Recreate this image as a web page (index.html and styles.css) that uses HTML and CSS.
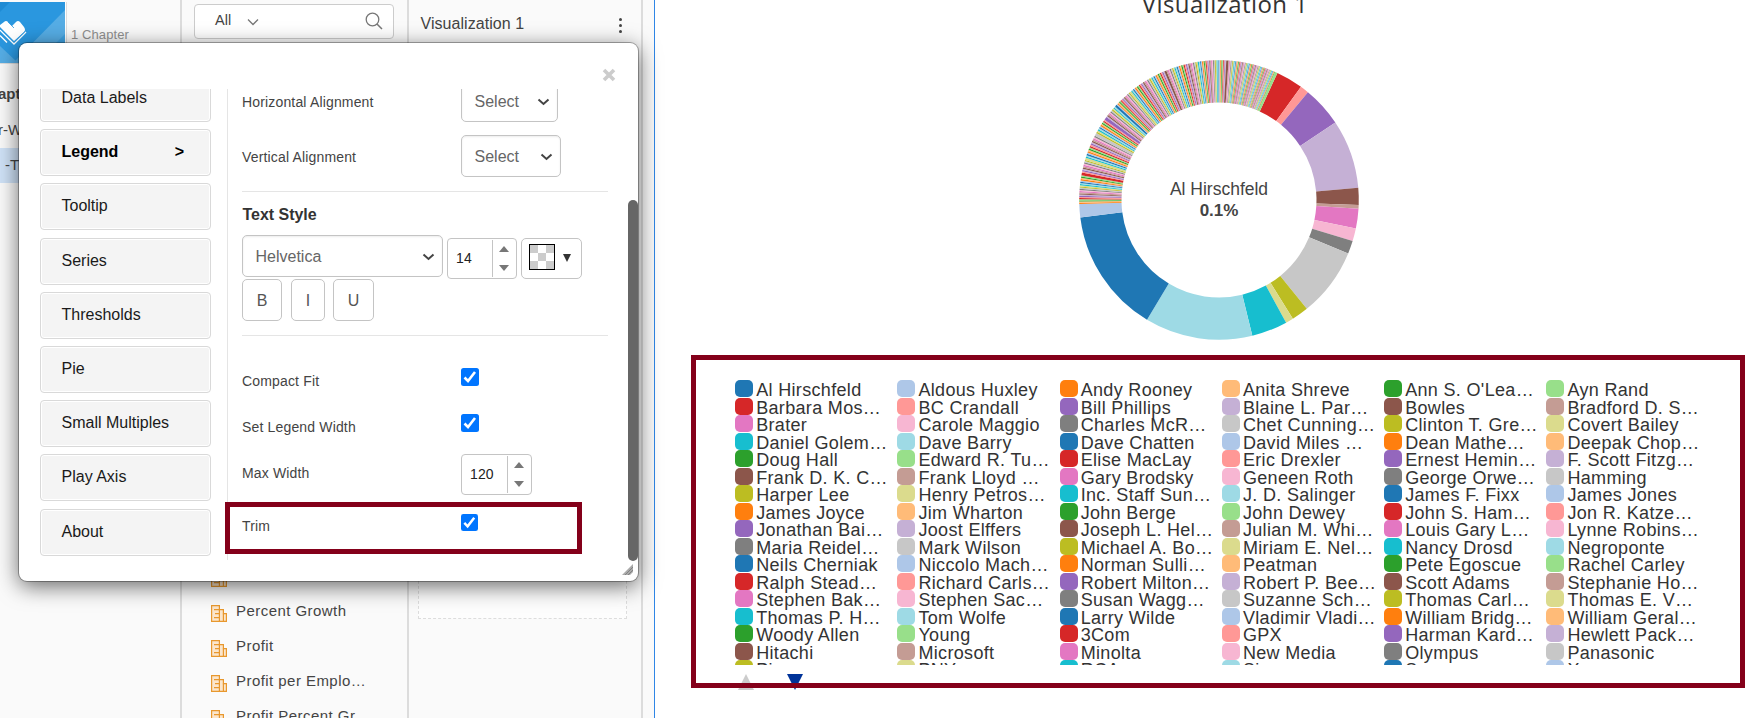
FILE: index.html
```
<!DOCTYPE html>
<html lang="en">
<head>
<meta charset="utf-8">
<title>Visualization 1</title>
<link rel="stylesheet" href="styles.css">
</head>
<body>
<svg class="defs" aria-hidden="true">
  <symbol id="i-field" viewBox="0 0 16 17">
    <path d="M.6.6H8.4V4.6H12.4V8.6H15.4V16.4H.6Z" fill="#fbe6cd" stroke="#e8982e" stroke-width="1.2"/>
    <path d="M8.4 4.6V16.4M12.4 8.6V16.4M3 4.6H8.4M4 8.6H8.4M3 12.6H8.4" fill="none" stroke="#e8982e" stroke-width="1.2"/>
  </symbol>
  <symbol id="i-chev" viewBox="0 0 12 8"><path d="M1 1.5L6 6L11 1.5" fill="none" stroke="currentColor" stroke-width="2"/></symbol>
</svg>
<div class="app">
  <aside class="book">
    <header class="book-head">
      <svg class="logo" width="65" height="61" viewBox="0 0 65 61">
        <rect width="65" height="61" fill="#2a97df"/>
        <path d="M65 8V61H13Z" fill="#56ade5"/><path d="M65 32V61H36Z" fill="#3fa2e2"/>
        <path d="M0 44L18 61H0Z" fill="#56ade5"/><path d="M0 0H10L0 10Z" fill="#1f8bd4"/>
        <path d="M0 23L4 20Q6 18 8 20L12 24L16 20Q18 18 20 20L24 25Q26 28 24 30L14 39L0 25Z" fill="#fff"/>
        <path d="M0 33.500L7 40.500M0 28L14 42L26 30" fill="none" stroke="#fff" stroke-width="1.4"/>
        <path d="M0 26.500L14 40.300L25 29.500M8 20L14 26" fill="none" stroke="#2a97df" stroke-width=".8"/>
      </svg>
      <span class="chapters">1 Chapter</span>
    </header>
    <div class="tree">
      <div class="tree-title">apters</div>
      <div class="tree-item">r-Wise</div>
      <div class="tree-item active">-Trim</div>
    </div>
  </aside>
  <section class="fields">
    <div class="search"><span>All</span>
      <svg class="search-chev" width="12" height="8" viewBox="0 0 12 8"><path d="M1 1.500L6 6.500L11 1.500" fill="none" stroke="#777" stroke-width="1.3"/></svg>
      <svg class="search-icon" width="18" height="18" viewBox="0 0 18 18"><circle cx="7.5" cy="7.5" r="6.3" fill="none" stroke="#777" stroke-width="1.3"/><path d="M12 12L17 17" stroke="#777" stroke-width="1.5"/></svg>
    </div>
    <div class="field-list">
      <div class="field"><svg><use href="#i-field"/></svg></div>
      <div class="field"><svg><use href="#i-field"/></svg>Percent Growth</div>
      <div class="field"><svg><use href="#i-field"/></svg>Profit</div>
      <div class="field"><svg><use href="#i-field"/></svg>Profit per Emplo…</div>
      <div class="field"><svg><use href="#i-field"/></svg>Profit Percent Gr…</div>
    </div>
  </section>
  <section class="shelf">
    <div class="shelf-head"><span>Visualization 1</span><i class="dots"><b></b><b></b><b></b></i></div>
    <div class="dropzone"></div>
  </section>
  <main class="canvas">
    <h1>Visualization 1</h1>
    <div class="chart">
      <svg id="donut" width="282" height="282" viewBox="-141 -141 282 282"></svg>
      <div class="center"><span>Al Hirschfeld</span><strong>0.1%</strong></div>
    </div>
    <div class="legend" id="legend"></div>
    <div class="pager">
      <svg width="16" height="16"><path d="M8 0L16 16H0Z" fill="#ccc"/></svg>
      <svg width="16" height="16"><path d="M0 0H16L8 16Z" fill="#039"/></svg>
    </div>
  </main>
</div>

<div class="modal">
  <svg class="close" width="14" height="14" viewBox="0 0 14 14"><path d="M2 2L12 12M12 2L2 12" stroke="#ccc" stroke-width="3.6"/></svg>
  <div class="modal-body">
    <nav class="menu">
      <a>Data Labels</a>
      <a class="on">Legend<span>&gt;</span></a>
      <a>Tooltip</a><a>Series</a><a>Thresholds</a><a>Pie</a><a>Small Multiples</a><a>Play Axis</a><a>About</a>
    </nav>
    <div class="form">
      <div class="row first"><label>Horizontal Alignment</label><div class="select s1">Select<svg><use href="#i-chev"/></svg></div></div>
      <div class="row"><label>Vertical Alignment</label><div class="select s2">Select<svg><use href="#i-chev"/></svg></div></div>
      <hr>
      <h2>Text Style</h2>
      <div class="fontrow">
        <div class="select font">Helvetica<svg><use href="#i-chev"/></svg></div>
        <div class="num">14<span class="spin"><i class="up"></i><i class="down"></i></span></div>
        <div class="color"><svg width="26" height="26" viewBox="0 0 26 26"><rect x=".5" y=".5" width="25" height="25" fill="#fff" stroke="#000"/><path d="M1 1h8v8h8v8h8v8h-8v-8h-8v8h-8v-8h8v-8h-8zM17 1h8v8h-8z" fill="#ccc"/></svg><i></i></div>
      </div>
      <div class="styles"><span class="b">B</span><span class="i">I</span><span class="u">U</span></div>
      <hr>
      <div class="opt o1"><label>Compact Fit</label><svg class="check" viewBox="0 0 18 18"><rect width="18" height="18" rx="2.5" fill="#0075ff"/><path d="M3.500 9.500L7 13L14 4" fill="none" stroke="#fff" stroke-width="2.6"/></svg></div>
      <div class="opt o2"><label>Set Legend Width</label><svg class="check" viewBox="0 0 18 18"><rect width="18" height="18" rx="2.5" fill="#0075ff"/><path d="M3.500 9.500L7 13L14 4" fill="none" stroke="#fff" stroke-width="2.6"/></svg></div>
      <div class="opt o3"><label>Max Width</label><div class="num">120<span class="spin"><i class="up"></i><i class="down"></i></span></div></div>
      <div class="opt o4"><label>Trim</label><svg class="check small" viewBox="0 0 18 18"><rect width="18" height="18" rx="2.5" fill="#0075ff"/><path d="M3.500 9.500L7 13L14 4" fill="none" stroke="#fff" stroke-width="2.6"/></svg></div>
    </div>
  </div>
  <div class="scroll"></div>
  <svg class="grip" width="11" height="11"><path d="M11 0V8L8 11H0Z" fill="#aaa"/><path d="M3 11L11 3M6 11L11 6" stroke="#777" stroke-width=".8"/></svg>
</div>
<div class="mark mark-trim"></div>
<div class="mark mark-legend"></div>
<script src="chart.js"></script>
</body>
</html>
```
FILE: styles.css
```
* { box-sizing: border-box; }
body { margin: 0; height: 718px; overflow: hidden; position: relative; background: #fff; font-family: "Liberation Sans", Arial, sans-serif; color: #444; }
.defs { position: absolute; width: 0; height: 0; }
.app { display: grid; grid-template-columns: 182px 227px 234px 11px 1fr; height: 718px; background: #fafafa; }
.book, .fields, .shelf { overflow: hidden; border-right: 2px solid #dcdcdc; }
.book-head { display: flex; height: 64px; padding-top: 2px; border-bottom: 1px solid #ddd; }
.logo { display: block; flex: none; box-shadow: 1px 0 0 #fff, 2px 0 0 #ddd; }
.chapters { margin: 25px 0 0 6px; font-size: 13px; line-height: 16px; color: #909090; letter-spacing: .1px; }
.tree { font-size: 15px; white-space: nowrap; padding-top: 13px; }
.tree-title { font-weight: bold; height: 35px; line-height: 34px; margin-left: -2px; }
.tree-item { height: 36px; line-height: 36px; margin-left: -2px; }
.tree-item.active { background: #cfe2f7; line-height: 34px; padding-left: 5px; margin-left: 0; height: 35px; }
.search { display: flex; align-items: center; height: 35px; width: 200px; margin: 4px 0 0 12px; border: 1px solid #ccc; border-radius: 4px; background: #fff; padding: 0 10px 4px 20px; font-size: 14.5px; }
.search-chev { margin: 4px 0 0 16px; }
.search-icon { margin: 2px 0 0 auto; }
.field-list { margin-top: 525px; }
.field { display: flex; height: 35.1px; line-height: 12px; font-size: 15px; letter-spacing: .45px; padding: 6px 0 0 29px; gap: 9px; white-space: nowrap; color: #444; }
.field svg { width: 16px; height: 17px; flex: none; }
.shelf-head { display: flex; height: 43px; justify-content: space-between; padding: 14px 18px 0 11.5px; font-size: 16px; line-height: 19px; letter-spacing: .05px; }
.dots { display: flex; flex-direction: column; gap: 3px; padding-top: 4px; width: 6px; align-items: center; }
.dots b { width: 3px; height: 3px; border-radius: 50%; background: #444; flex: none; }
.dropzone { height: 400px; margin: 176px 14px 0 9px; border: 1px dashed #ddd; background: #fdfdfd; }
.canvas { grid-column: 5; background: #fff; overflow: hidden; border-left: 1px solid #2f86e6; }
h1 { margin: -13px 0 0; width: 1140px; font: 400 24px/34px "Open Sans", sans-serif; color: #333; text-align: center; letter-spacing: .4px; }
.chart { display: grid; margin: 38px 0 0 423px; width: 282px; height: 282px; }
.chart > * { grid-area: 1 / 1; }
.center { display: flex; flex-direction: column; align-items: center; padding-top: 120px; font-size: 17.5px; line-height: 21px; color: #444; }
.center strong { font-size: 17px; }
.legend { display: grid; grid-template-columns: repeat(6, 162.25px); grid-auto-rows: 17.5px; margin: 39px 0 0 80px; height: 285px; overflow: hidden; }
.item { display: flex; gap: 3.2px; white-space: nowrap; font-size: 18px; letter-spacing: .33px; line-height: 21.6px; color: #333; }
.item i { width: 18px; height: 17px; border-radius: 5px; flex: none; }
.pager { display: flex; gap: 33px; margin: 9px 0 0 82.5px; }
.mark { position: absolute; border: 5px solid #84001a; }
.mark-trim { left: 225px; top: 502px; width: 357px; height: 52px; }
.mark-legend { left: 691px; top: 355px; width: 1054px; height: 333px; }
.modal { position: absolute; left: 19px; top: 43px; width: 619px; height: 538px; padding: 46px 29px 0 21px; background: #fff; border-radius: 8px; box-shadow: 0 0 0 1px rgba(0,0,0,.3), 0 5px 22px rgba(0,0,0,.6); }
.close { position: absolute; right: 22px; top: 24.5px; }
.scroll { position: absolute; right: 0; top: 157px; width: 10px; height: 361px; border-radius: 5px; background: #666; }
.grip { position: absolute; right: 5px; top: 521px; }
.modal-body { display: flex; height: 471px; overflow: hidden; }
.menu { width: 188px; border-right: 1px solid #e5e5e5; display: flex; flex-direction: column; gap: 7.2px; flex: none; }
.menu a { display: flex; justify-content: space-between; width: 171px; height: 47px; line-height: 44px; padding: 0 26px 0 20.5px; background: #f4f4f4; border: 1px solid #d9d9d9; border-radius: 4px; font-size: 16px; color: #1a1a1a; flex: none; box-shadow: inset 0 0 0 1px #fff; }
.menu a:first-child { margin-top: -14px; }
.menu .on { font-weight: bold; color: #000; }
.form { width: 366px; margin-left: 14px; font-size: 14px; }
.form label { width: 219px; letter-spacing: .16px; line-height: 16px; color: #444; flex: none; }
.row { display: flex; height: 42px; margin-bottom: 13px; align-items: center; }
.row label { padding-top: 2px; }
.row.first { margin-top: -9px; }
.form hr { border: 0; border-top: 1px solid #e5e5e5; margin: 14px 0 0; }
.select { display: flex; align-items: center; justify-content: space-between; height: 42px; border: 1px solid #c4c4c4; border-radius: 5px; font-size: 16px; color: #666; padding: 2px 7px 0 12.5px; background: #fff; box-shadow: inset 0 1px 2px rgba(0,0,0,.08); }
.select svg { width: 13px; height: 8px; color: #444; }
.s1 { width: 97px; } .s2 { width: 100px; } .font { width: 201px; }
h2 { margin: 13px 0 10px; font-size: 16px; line-height: 20px; color: #333; letter-spacing: -.03px; padding-left: .5px; }
.fontrow { display: flex; height: 42px; align-items: flex-start; }
.num { display: flex; height: 41px; width: 70px; border: 1px solid #c4c4c4; border-radius: 4px; color: #222; padding-left: 8px; font-size: 14px; line-height: 39px; justify-content: space-between; letter-spacing: .15px; }
.spin { width: 24px; height: 37px; margin-top: 1px; border-left: 1px solid #c4c4c4; display: flex; flex-direction: column; align-items: center; gap: 13px; padding: 6px 2px 0 0; }
.spin i { border: 5px solid transparent; }
.spin .up { border-top: 0; border-bottom: 6px solid #777; }
.spin .down { border-bottom: 0; border-top: 6px solid #777; }
.fontrow .num { margin: 3px 4px 0 4px; }
.color { display: flex; width: 61px; height: 41px; margin-top: 3px; border: 1px solid #c4c4c4; border-radius: 5px; padding: 5px 0 0 7px; gap: 8px; }
.color i { margin-top: 10px; height: 8px; border: 4.5px solid transparent; border-top: 8px solid #333; border-bottom: 0; }
.styles { display: flex; margin-top: 2px; height: 42px; gap: 9px; font-size: 16px; line-height: 41px; text-align: center; color: #555; }
.styles span { border: 1px solid #c4c4c4; border-radius: 5px; }
.b { width: 40px; } .i { width: 34px; } .u { width: 41px; margin-left: -1px; }
.opt { display: flex; align-items: flex-start; }
.check { width: 18px; height: 18px; }
.check.small { width: 17px; height: 17px; }
.opt label { margin-top: 5px; }
.o1 { margin-top: 32px; height: 46px; } .o2 { height: 40px; } .o3 { height: 60px; }
.o3 label { margin-top: 11px; } .o3 .num { width: 71px; }
.o4 label { margin-top: 4px; }
```
FILE: chart.js
```
const colors = ['#1f77b4', '#aec7e8', '#ff7f0e', '#ffbb78', '#2ca02c', '#98df8a', '#d62728', '#ff9896', '#9467bd', '#c5b0d5',
  '#8c564b', '#c49c94', '#e377c2', '#f7b6d2', '#7f7f7f', '#c7c7c7', '#bcbd22', '#dbdb8d', '#17becf', '#9edae5'];

const names = [
  'Al Hirschfeld', 'Aldous Huxley', 'Andy Rooney', 'Anita Shreve', "Ann S. O'Lea…", 'Ayn Rand',
  'Barbara Mos…', 'BC Crandall', 'Bill Phillips', 'Blaine L. Par…', 'Bowles', 'Bradford D. S…',
  'Brater', 'Carole Maggio', 'Charles McR…', 'Chet Cunning…', 'Clinton T. Gre…', 'Covert Bailey',
  'Daniel Golem…', 'Dave Barry', 'Dave Chatten', 'David Miles …', 'Dean Mathe…', 'Deepak Chop…',
  'Doug Hall', 'Edward R. Tu…', 'Elise MacLay', 'Eric Drexler', 'Ernest Hemin…', 'F. Scott Fitzg…',
  'Frank D. K. C…', 'Frank Lloyd …', 'Gary Brodsky', 'Geneen Roth', 'George Orwe…', 'Hamming',
  'Harper Lee', 'Henry Petros…', 'Inc. Staff Sun…', 'J. D. Salinger', 'James F. Fixx', 'James Jones',
  'James Joyce', 'Jim Wharton', 'John Berge', 'John Dewey', 'John S. Ham…', 'Jon R. Katze…',
  'Jonathan Bai…', 'Joost Elffers', 'Joseph L. Hel…', 'Julian M. Whi…', 'Louis Gary L…', 'Lynne Robins…',
  'Maria Reidel…', 'Mark Wilson', 'Michael A. Bo…', 'Miriam E. Nel…', 'Nancy Drosd', 'Negroponte',
  'Neils Cherniak', 'Niccolo Mach…', 'Norman Sulli…', 'Peatman', 'Pete Egoscue', 'Rachel Carley',
  'Ralph Stead…', 'Richard Carls…', 'Robert Milton…', 'Robert P. Bee…', 'Scott Adams', 'Stephanie Ho…',
  'Stephen Bak…', 'Stephen Sac…', 'Susan Wagg…', 'Suzanne Sch…', 'Thomas Carl…', 'Thomas E. V…',
  'Thomas P. H…', 'Tom Wolfe', 'Larry Wilde', 'Vladimir Vladi…', 'William Bridg…', 'William Geral…',
  'Woody Allen', 'Young', '3Com', 'GPX', 'Harman Kard…', 'Hewlett Pack…',
  'Hitachi', 'Microsoft', 'Minolta', 'New Media', 'Olympus', 'Panasonic',
  'Pioneer', 'PNY', 'RCA', 'Sigma', 'Sony', 'Xerox'];

document.getElementById('legend').innerHTML = names.map((n, i) =>
  `<div class="item"><i style="background:${colors[i % 20]}"></i>${n}</div>`).join('');

/* Large slices: [start angle, palette index]; angles clockwise from the top. */
const large = [[24.7, 6], [35.9, 7], [39.5, 8], [56.3, 9], [85, 10], [92.1, 11], [93.6, 12], [101.8, 13], [107.1, 14],
  [112.5, 15], [141.1, 16], [148.1, 17], [151.3, 18], [166.2, 19], [211, 0], [262.8, 1], [268.4, null]];
const slices = [];
for (let k = 0; k < large.length - 1; k++) slices.push([large[k][0], large[k + 1][0], large[k][1]]);

/* Small slices run through the palette once per group. */
const groups = [[268.4, 277, 2, 19], [277, 288.7, 0, 19], [288.7, 301, 0, 19], [301, 312, 0, 19], [312, 322, 0, 19],
  [322, 332, 0, 19], [332, 342.3, 0, 19], [342.3, 352.2, 0, 19], [352.2, 359.8, 0, 19], [359.8, 366.8, 0, 19],
  [366.8, 372.5, 0, 19], [372.5, 377.8, 0, 19], [377.8, 382.6, 0, 19], [382.6, 384.7, 0, 5]];
const heavy = { '1-6': 2.2, '1-17': 1.8, '2-15': 2.2, '3-8': 2.6, '4-0': 2, '4-17': 1.8, '6-10': 1.8, '9-10': 3, '13-5': 5 };
groups.forEach(([a, b, from, to], g) => {
  const w = [];
  for (let c = from; c <= to; c++) w.push(heavy[g + '-' + c] || 1);
  const unit = (b - a) / w.reduce((s, v) => s + v, 0);
  let at = a;
  w.forEach((v, k) => { slices.push([at, at + v * unit, from + k]); at += v * unit; });
});

const R = 139.8, r = 97.5;
const pt = (deg, rad) => {
  const t = deg * Math.PI / 180;
  return (rad * Math.sin(t)).toFixed(2) + ' ' + (-rad * Math.cos(t)).toFixed(2);
};
document.getElementById('donut').innerHTML = slices.map(([a, b, c]) =>
  `<path d="M${pt(a, R)}A${R} ${R} 0 0 1 ${pt(b, R)}L${pt(b, r)}A${r} ${r} 0 0 0 ${pt(a, r)}Z" fill="${colors[c]}"/>`).join('');
```
